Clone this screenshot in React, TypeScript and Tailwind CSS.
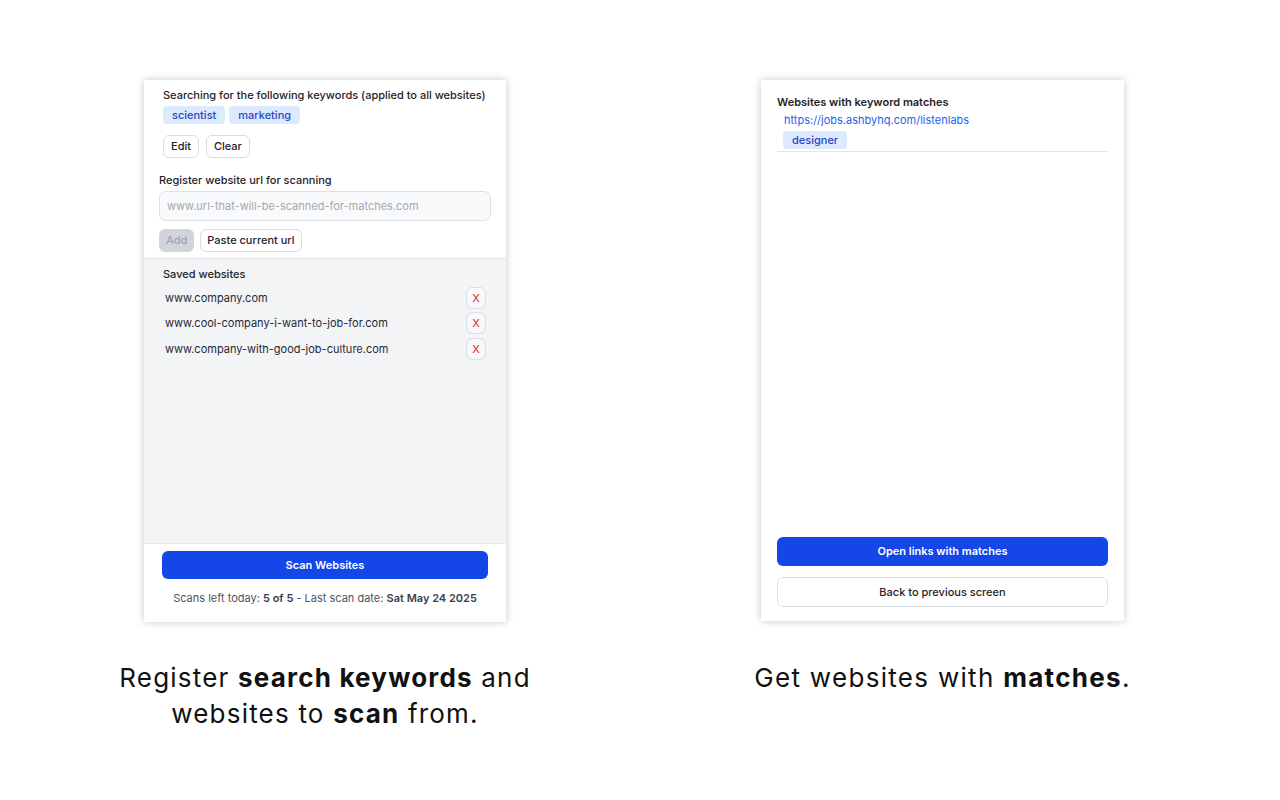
import React from "react";

const sans = { fontFamily: "Inter, 'Noto Sans', sans-serif" };

function Tag({ children }: { children: React.ReactNode }) {
  return (
    <span className="inline-flex h-[18px] items-center rounded-[4px] bg-[#dbeafe] px-[9px] text-[11px] font-medium text-[#2f45c0]">
      {children}
    </span>
  );
}

function SmallButton({ children }: { children: React.ReactNode }) {
  return (
    <button className="h-[23px] rounded-[6px] border border-[#d9dce1] bg-white px-[7px] text-[11px] font-medium text-[#1f2328]">
      {children}
    </button>
  );
}

function SiteRow({ url }: { url: string }) {
  return (
    <div className="flex h-[25.5px] items-center justify-between pl-[2px]">
      <span className="text-[11px] text-[#1f2937]">{url}</span>
      <button className="flex h-[22px] w-[20px] items-center justify-center rounded-[6px] border border-[#dcdfe4] bg-[#f7f8f9] text-[11px] text-[#e5252a]">
        X
      </button>
    </div>
  );
}

function LeftPanel() {
  return (
    <div className="flex h-[542px] w-[362px] flex-col bg-white shadow-[0_0_8px_rgba(0,0,0,0.22)]">
      <div className="border-b border-[#e3e5e8] px-[15px] pb-[6px] pt-[7px]">
        <div className="pl-[4px]">
          <div className="text-[11px] font-medium leading-[16px] text-[#1f2328]">
            Searching for the following keywords (applied to all websites)
          </div>
          <div className="mt-[3px] flex gap-[4px]">
            <Tag>scientist</Tag>
            <Tag>marketing</Tag>
          </div>
          <div className="mt-[11px] flex gap-[7px]">
            <SmallButton>Edit</SmallButton>
            <SmallButton>Clear</SmallButton>
          </div>
        </div>
        <div className="mt-[14px] text-[11px] font-medium leading-[16px] text-[#1f2328]">
          Register website url for scanning
        </div>
        <div className="mt-[3px] flex h-[30px] w-[332px] items-center rounded-[7px] border border-[#dcdfe4] bg-[#f9fafb] px-[7px] text-[11px] text-[#a3a8b0]">
          www.url-that-will-be-scanned-for-matches.com
        </div>
        <div className="mt-[8px] flex gap-[6px]">
          <button className="h-[23px] rounded-[6px] bg-[#d1d5db] px-[7px] text-[11px] font-medium text-[#9ca3af]">
            Add
          </button>
          <button className="h-[23px] rounded-[6px] border border-[#d9dce1] bg-white px-[6px] text-[11px] font-medium text-[#1f2328]">
            Paste current url
          </button>
        </div>
      </div>
      <div className="flex-1 bg-[#f3f4f6] pl-[19px] pr-[20px] pt-[7px]">
        <div className="text-[11px] font-medium leading-[16px] text-[#1f2328]">Saved websites</div>
        <div className="mt-[3px] flex flex-col">
          <SiteRow url="www.company.com" />
          <SiteRow url="www.cool-company-i-want-to-job-for.com" />
          <SiteRow url="www.company-with-good-job-culture.com" />
        </div>
      </div>
      <div className="border-t border-[#e3e5e8] px-[18px] pb-[16px] pt-[7px]">
        <button className="flex h-[28px] w-full items-center justify-center rounded-[6px] bg-[#1546e8] text-[11px] font-semibold text-white">
          Scan Websites
        </button>
        <div className="mt-[11px] text-center text-[11px] leading-[16px] text-[#4b5563]">
          Scans left today: <span className="font-semibold text-[#374151]">5 of 5</span> - Last scan date:{" "}
          <span className="font-semibold text-[#374151]">Sat May 24 2025</span>
        </div>
      </div>
    </div>
  );
}

function RightPanel() {
  return (
    <div className="flex h-[541px] w-[363px] flex-col bg-white px-[16px] pb-[14px] pt-[14px] shadow-[0_0_8px_rgba(0,0,0,0.22)]">
      <div className="text-[11px] font-semibold leading-[16px] text-[#1f2328]">Websites with keyword matches</div>
      <div className="border-b border-[#e3e5e8] pb-[2px]">
        <div className="mt-[2px] pl-[7px] text-[11px] leading-[16px] text-[#2563eb]">https://jobs.ashbyhq.com/listenlabs</div>
        <div className="mt-[3px] flex pl-[6px]">
          <Tag>designer</Tag>
        </div>
      </div>
      <div className="flex-1" />
      <button className="flex h-[29px] w-full items-center justify-center rounded-[6px] bg-[#1546e8] text-[11px] font-semibold text-white">
        Open links with matches
      </button>
      <button className="mt-[11px] flex h-[30px] w-full items-center justify-center rounded-[6px] border border-[#dcdfe4] bg-white text-[11px] font-medium text-[#1f2328]">
        Back to previous screen
      </button>
    </div>
  );
}

export default function App() {
  return (
    <div className="flex h-[800px] w-[1280px] bg-white pl-[144px] pt-[80px]" style={sans}>
      <div className="flex w-[362px] flex-col items-center">
        <LeftPanel />
        <div className="mt-[38px] whitespace-nowrap text-center text-[26px] leading-[36px] tracking-[1.2px] text-[#111111]">
          Register <span className="font-bold">search keywords</span> and
          <br />
          websites to <span className="font-bold">scan</span> from.
        </div>
      </div>
      <div className="ml-[255px] flex w-[363px] flex-col items-center">
        <RightPanel />
        <div className="mt-[39px] whitespace-nowrap text-center text-[26px] leading-[36px] tracking-[1.3px] text-[#111111]">
          Get websites with <span className="font-bold">matches</span>.
        </div>
      </div>
    </div>
  );
}
